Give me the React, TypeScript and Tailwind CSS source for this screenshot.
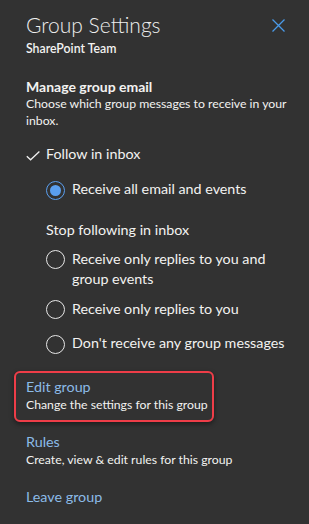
import React from "react";

const font = { fontFamily: 'Lato, "Liberation Sans", sans-serif' };

function Radio({ checked }: { checked?: boolean }) {
	return (
		<span
			className={
				"shrink-0 w-[19px] h-[19px] rounded-full border flex items-center justify-center " +
				(checked ? "border-[#5a9ff0]" : "border-[#e6e6e6]")
			}
		>
			{checked && <span className="w-[11px] h-[11px] rounded-full bg-[#5a9ff0]" />}
		</span>
	);
}

function Option({ label, checked, className }: { label: string; checked?: boolean; className?: string }) {
	return (
		<div className={"flex items-start gap-[7px] " + (className ?? "")}>
			<div className="pt-[1.5px]">
				<Radio checked={checked} />
			</div>
			<span className="text-[14.3px] leading-[20px]">{label}</span>
		</div>
	);
}

export default function App() {
	return (
		<div
			className="w-[309px] h-[524px] bg-[#323232] text-[#f3f2f1] overflow-hidden pl-[26px] pr-[18px] pt-[11px]"
			style={font}
		>
			{/* header */}
			<div className="flex items-start justify-between pr-[6px]">
				<h1 className="text-[21px] leading-[28px] font-light text-[#eeeeee]">Group Settings</h1>
				<button className="mt-[8px] text-[#4a9ae8]">
					<svg width="13" height="13" viewBox="0 0 13 13" fill="none" stroke="currentColor" strokeWidth="1.3">
						<path d="M0.5 0.5 L12.5 12.5 M12.5 0.5 L0.5 12.5" />
					</svg>
				</button>
			</div>
			<p className="text-[12.3px] leading-[16px] font-semibold mt-[2px]">SharePoint Team</p>

			{/* manage group email */}
			<p className="mt-[22px] text-[14px] leading-[16px] font-bold">Manage group email</p>
			<p className="text-[12.25px] leading-[17px]">
				Choose which group messages to receive in your inbox.
			</p>

			<div className="mt-[15px] flex items-start gap-[6px]">
				<svg className="mt-[7px]" width="14" height="10" viewBox="0 0 14 10" fill="none" stroke="#f0f0f0" strokeWidth="1.3">
					<path d="M0.8 5.2 L4.6 8.8 L13.4 0.6" />
				</svg>
				<span className="text-[14.3px] leading-[20px]">Follow in inbox</span>
			</div>

			<div className="pl-[20px] flex flex-col">
				<Option className="mt-[15px]" label="Receive all email and events" checked />
				<p className="text-[14.3px] leading-[20px] mt-[20px]">Stop following in inbox</p>
				<Option className="mt-[9px]" label="Receive only replies to you and group events" />
				<Option className="mt-[10px]" label="Receive only replies to you" />
				<Option className="mt-[14px]" label="Don't receive any group messages" />
			</div>

			{/* links */}
			<div className="-ml-[12px] mt-[17px] w-[200px] border-2 border-[#ee3d48] rounded-[6px] pl-[10px] pt-[5.5px] pb-[6.5px] shadow-[0_2px_5px_rgba(0,0,0,0.45)]">
				<a className="block text-[14.3px] leading-[18px] text-[#8cbbe8]">Edit group</a>
				<p className="text-[12.25px] leading-[17px]">Change the settings for this group</p>
			</div>

			<div className="mt-[11.5px]">
				<a className="block text-[14.3px] leading-[18px] text-[#8cbbe8]">Rules</a>
				<p className="text-[12.25px] leading-[17px]">Create, view &amp; edit rules for this group</p>
			</div>

			<a className="block mt-[20px] text-[14.3px] leading-[18px] text-[#8cbbe8]">Leave group</a>
		</div>
	);
}
